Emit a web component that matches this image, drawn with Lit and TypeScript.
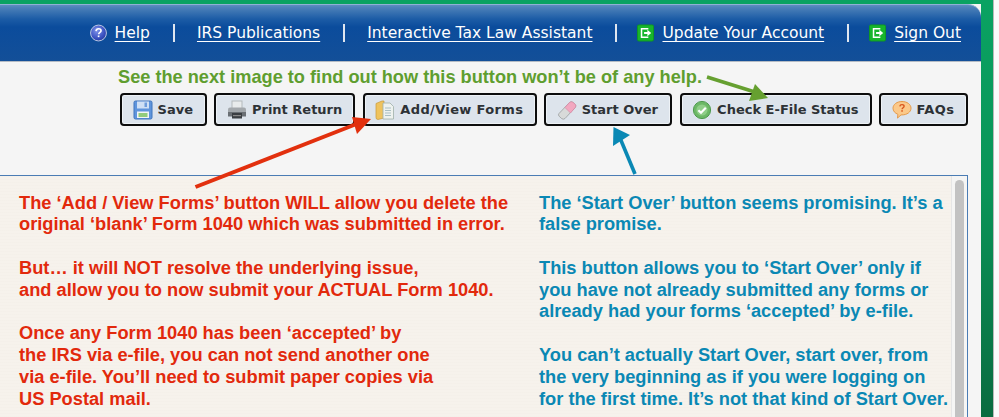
import { LitElement, html, css, svg } from "lit";
import { customElement } from "lit/decorators.js";

const helpIcon = html`<svg class="ni" viewBox="0 0 18 18"><defs><radialGradient id="hb" cx=".4" cy=".35" r=".7"><stop offset="0" stop-color="#7f93ea"/><stop offset=".7" stop-color="#3a50c0"/><stop offset="1" stop-color="#2a3c9c"/></radialGradient></defs><circle cx="9" cy="9" r="8.4" fill="url(#hb)" stroke="#c3cde6" stroke-width="1"/><path d="M6.4 7c.1-1.7 1.2-2.5 2.7-2.5s2.6.9 2.6 2.1c0 1.7-2.5 1.9-2.5 3.7" fill="none" stroke="#fff" stroke-width="1.7"/><rect x="8.2" y="11.6" width="1.8" height="1.8" fill="#fff"/></svg>`;
const exitIcon = html`<svg class="ni" viewBox="0 0 18 18"><rect x=".5" y=".5" width="17" height="17" rx="1.5" fill="#18b52c" stroke="#109a20"/><path d="M12 4.5H4.8v9H12" fill="none" stroke="#fff" stroke-width="1.6"/><path d="M7.5 8h3.5V5.6L15 9l-4 3.4V10H7.5z" fill="#fff"/></svg>`;

const saveIcon = svg`<rect x="1" y="1" width="18" height="18" rx="1.5" fill="#5f95dc" stroke="#3f74bd"/><rect x="4" y="1.5" width="12" height="7" fill="#cfe0f5"/><rect x="11.5" y="2.5" width="2.5" height="4.5" fill="#6f9ddc"/><rect x="4" y="11.5" width="12" height="6.5" fill="#f1f4f6"/><rect x="5.5" y="13" width="9" height="4" fill="#92cc7c"/>`;
const printIcon = svg`<rect x="5" y="1" width="10" height="8" fill="#e8ebec" stroke="#b4b9bc"/><path d="M1 9.5q0-2 2-2h14q2 0 2 2V16H1z" fill="#a3a8ac"/><rect x="1" y="12" width="18" height="4.5" fill="#6a6f74"/><rect x="5" y="13" width="10" height="5.5" fill="#3a3e42"/><rect x="6" y="15" width="8" height="1.2" fill="#888"/>`;
const formsIcon = svg`<path d="M1 3.5 7 1h2v17l-6 1.5q-2 0-2-2z" fill="#efc35e" stroke="#c99a3a" stroke-width=".7"/><path d="M8 3h7l3.5 3.5V19H8z" fill="#eef2ef" stroke="#9fb0a8" stroke-width=".8"/><path d="M10 8h6M10 10.5h6M10 13h6M10 15.5h6" stroke="#a9bfc4"/>`;
const eraserIcon = svg`<path d="M2 13.5 12.5 2.5q1.6-1.5 3.4-.2l2.3 2q1.4 1.6 0 3.3L8 18.5q-1.6 1.3-3.2.2l-2.6-2.4q-1.4-1.4-.2-2.8z" fill="#d8dad9" stroke="#999d9e" stroke-width=".8"/><path d="M8 7.5 12.5 2.5q1.6-1.5 3.4-.2l2.3 2q1.4 1.6 0 3.3L13.5 13z" fill="#f2a8c0" stroke="#d6829f" stroke-width=".6"/>`;
const checkIcon = svg`<circle cx="10" cy="10" r="8.6" fill="#6cb866" stroke="#4e9a4e"/><circle cx="10" cy="10" r="5.6" fill="#8fce88"/><path d="M6.4 10.2 9 12.8l4.8-5" fill="none" stroke="#fff" stroke-width="2.2"/>`;
const faqIcon = svg`<path d="M10 1.5c5 0 9 2.9 9 6.7s-4 6.7-9 6.7l-1 0-3.5 3.2.4-3.8C3 13.2 1 11 1 8.2 1 4.4 5 1.5 10 1.5z" fill="#fbc98a" stroke="#e59a4a"/><path d="M7.8 6.3c.2-1.2 1.1-1.7 2.2-1.7s2.1.7 2.1 1.7c0 1.4-2 1.5-2 3" fill="none" stroke="#d8541c" stroke-width="1.4"/><rect x="9.3" y="10.2" width="1.5" height="1.5" fill="#d8541c"/>`;

const navItems = [
  { icon: helpIcon, label: "Help" },
  { label: "IRS Publications" },
  { label: "Interactive Tax Law Assistant" },
  { icon: exitIcon, label: "Update Your Account" },
  { icon: exitIcon, label: "Sign Out" },
];
const buttons = [
  { icon: saveIcon, label: "Save", w: 87, ls: 0 },
  { icon: printIcon, label: "Print Return", w: 141, ls: 0 },
  { icon: formsIcon, label: "Add/View Forms", w: 174, ls: 0.35 },
  { icon: eraserIcon, label: "Start Over", w: 128, ls: 0 },
  { icon: checkIcon, label: "Check E-File Status", w: 192, ls: 0 },
  { icon: faqIcon, label: "FAQs", w: 89, ls: 0.4 },
];

@customElement("app-root")
export class AppRoot extends LitElement {
  static styles = css`
    :host { display: block; width: 999px; height: 417px; overflow: hidden; background: #fff; font-family: "Liberation Sans", Arial, sans-serif; }
    .page { position: relative; height: 417px; display: flex; flex-direction: column; }
    .strip { height: 4px; background: #0aa262; margin-right: 6px; flex: none; }
    .body { flex: 1; display: flex; min-height: 0; }
    .panel { width: 981px; flex: none; display: flex; flex-direction: column; background: #f5f5f5; min-height: 0; }
    .edge { width: 12px; flex: none; background: linear-gradient(#0aa262 0%, #0a9458 45%, #0a6b40 100%); }
    .rest { flex: 1; background: #fbfbfb; border-left: 1px solid #b9b9b9; margin-top: -4px; }
    .head { height: 58px; flex: none; box-sizing: border-box; display: flex; align-items: center; justify-content: flex-end; padding: 0 20px 0 0;
      background: linear-gradient(#5d8cc0 0, #4a7fb8 3px, #1c5ca6 14px, #0b4c9c 22px, #134f98 100%);
      border-top: 1px solid #8fb0d4; border-bottom: 1px solid #b4bbc4; border-top-right-radius: 13px; }
    .nav { display: flex; align-items: center; font-family: "DejaVu Sans", Verdana, sans-serif; font-size: 15.5px; color: #fff; }
    .item { display: flex; align-items: center; gap: 8px; }
    .item.plain { padding-left: 2px; }
    .item a { color: #fff; text-decoration: underline; text-underline-offset: 3px; text-decoration-thickness: 1px; }
    .ni { width: 17px; height: 18px; display: block; flex: none; }
    .sep { width: 2px; height: 18px; background: #dfe6f0; margin: 0 20px 0 23px; }
    .note { height: 31px; flex: none; box-sizing: border-box; padding: 5px 0 0 118px; font-weight: 700; font-size: 18.2px; line-height: 21px; color: #5f9e2f; }
    .btns { display: flex; justify-content: flex-end; gap: 7.4px; padding-right: 13px; flex: none; }
    .btn { height: 33px; box-sizing: border-box; display: flex; align-items: center; gap: 5px; padding-left: 10.5px; border: 2.5px solid #0d0d0d; border-radius: 4px; background: #dde4ec; box-shadow: inset 0 0 0 1px #eef2f6; font-family: "DejaVu Sans", Verdana, sans-serif; font-weight: 700; font-size: 13px; color: #2d3236; white-space: nowrap; }
    .bi { width: 20px; height: 20px; display: block; flex: none; }
    .box { margin: 49px 13px 0 -2px; flex: 1; min-height: 0; display: flex; border: 1px solid #4a7cb4; border-bottom: none; background-color: #f6f2ec;
      background-image: repeating-linear-gradient(0deg, rgba(120,100,70,.012) 0 1px, transparent 1px 3px); overflow: hidden; }
    .cols { flex: 1; display: grid; grid-template-columns: 520px 1fr; padding: 15.5px 0 0 20px; font-weight: 700; font-size: 18.25px; line-height: 21.8px; white-space: nowrap; }
    .red { color: #e2290c; }
    .blue { color: #0a88b4; }
    p { margin: 0 0 21.8px; }
    .track { width: 16px; flex: none; background: #f5f5f4; border-left: 1px solid #e6e6e6; display: flex; justify-content: center; padding-top: 4px; box-sizing: border-box; }
    .thumb { width: 9px; height: 300px; background: #c2c2c2; border-radius: 5px; }
    .arrows { position: absolute; inset: 0; pointer-events: none; }
  `;

  render() {
    return html`<div class="page">
      <div class="strip"></div>
      <div class="body">
        <div class="panel">
          <div class="head"><div class="nav">
            ${navItems.map((n, i) => html`${i ? html`<div class="sep"></div>` : ""}<div class="item ${n.icon ? "" : "plain"}">${n.icon ?? ""}<a>${n.label}</a></div>`)}
          </div></div>
          <div class="note">See the next image to find out how this button won’t be of any help.</div>
          <div class="btns">
            ${buttons.map((b) => html`<div class="btn" style="width:${b.w}px;letter-spacing:${b.ls}px"><svg class="bi" viewBox="0 0 20 20">${b.icon}</svg><span>${b.label}</span></div>`)}
          </div>
          <div class="box">
            <div class="cols">
              <div class="red">
                <p>The ‘Add / View Forms’ button WILL allow you delete the<br>original ‘blank’ Form 1040 which was submitted in error.</p>
                <p>But… it will NOT resolve the underlying issue,<br>and allow you to now submit your ACTUAL Form 1040.</p>
                <p>Once any Form 1040 has been ‘accepted’ by<br>the IRS via e-file, you can not send another one<br>via e-file. You’ll need to submit paper copies via<br>US Postal mail.</p>
              </div>
              <div class="blue">
                <p>The ‘Start Over’ button seems promising. It’s a<br>false promise.</p>
                <p>This button allows you to ‘Start Over’ only if<br>you have not already submitted any forms or<br>already had your forms ‘accepted’ by e-file.</p>
                <p>You can’t actually Start Over, start over, from<br>the very beginning as if you were logging on<br>for the first time. It’s not that kind of Start Over.</p>
              </div>
            </div>
            <div class="track"><div class="thumb"></div></div>
          </div>
        </div>
        <div class="edge"></div>
        <div class="rest"></div>
      </div>
      <svg class="arrows" viewBox="0 0 999 417" width="999" height="417">
        <path d="M195.5 187 359 123" stroke="#e2300e" stroke-width="4" fill="none"/>
        <path d="M371 119 352 117 357 134z" fill="#e2300e"/>
        <path d="M635 174 620 138" stroke="#0a88b4" stroke-width="3.6" fill="none"/>
        <path d="M613.5 127 613 146 630 135z" fill="#0a88b4"/>
        <path d="M707 77 758 93" stroke="#66a030" stroke-width="3.6" fill="none"/>
        <path d="M768 98 755 84 749 101z" fill="#66a030"/>
      </svg>
    </div>`;
  }
}
